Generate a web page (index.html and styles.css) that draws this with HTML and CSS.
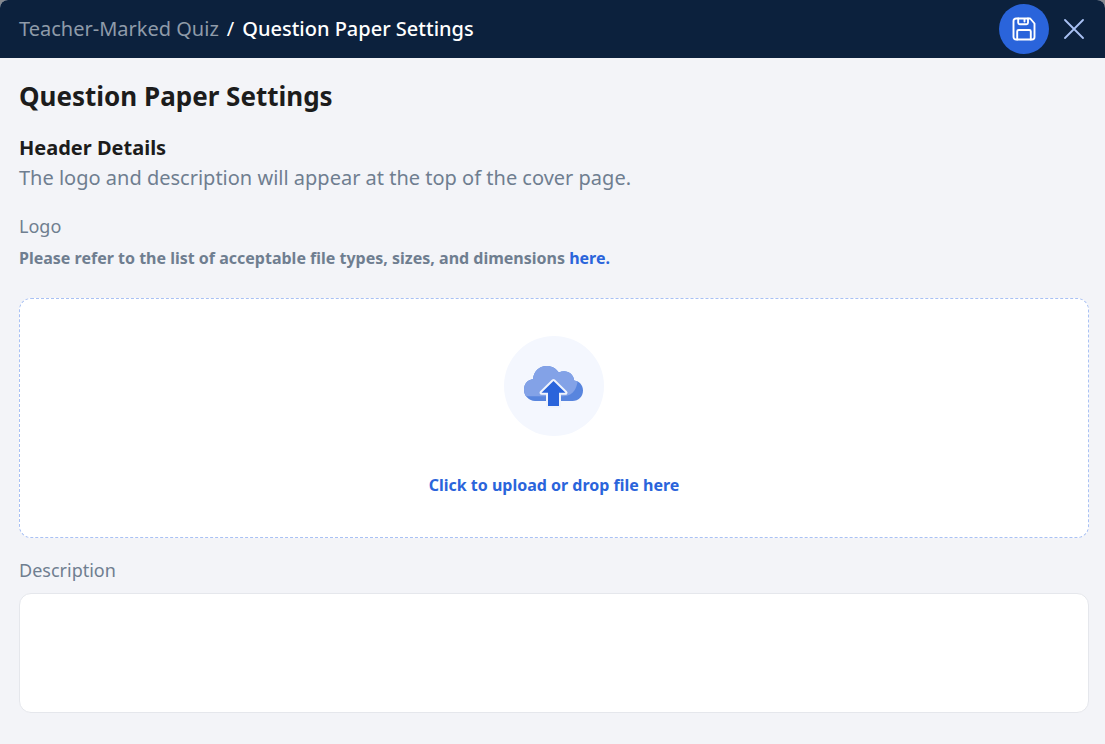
FILE: index.html
```html
<!DOCTYPE html>
<html lang="en">
<head>
<meta charset="utf-8">
<meta name="viewport" content="width=device-width, initial-scale=1">
<title>Question Paper Settings</title>
<link rel="stylesheet" href="styles.css">
</head>
<body>
<div class="dialog">
  <header class="topbar">
    <nav class="breadcrumb" aria-label="Breadcrumb">
      <a class="crumb" href="#">Teacher-Marked Quiz</a>
      <span class="separator">/</span>
      <span class="current">Question Paper Settings</span>
    </nav>
    <div class="actions">
      <button class="save" type="button" aria-label="Save">
        <svg width="24" height="24" viewBox="0 0 24 24" fill="none" stroke="currentColor" stroke-width="1.9" stroke-linejoin="round" stroke-linecap="round">
          <path d="M4 1.500h14.200l4.300 5V20a2.500 2.500 0 0 1-2.500 2.500H4A2.500 2.500 0 0 1 1.500 20V4A2.500 2.500 0 0 1 4 1.500Z"/>
          <path d="M6.200 1.500v4.300a1.500 1.500 0 0 0 1.500 1.500h6.800A1.500 1.500 0 0 0 16 5.800V1.500M12.500 2v2.500M5.200 22.500v-8A1.500 1.500 0 0 1 6.700 13h10.600a1.500 1.500 0 0 1 1.500 1.500v8"/>
        </svg>
      </button>
      <button class="close" type="button" aria-label="Close">
        <svg width="20" height="20" viewBox="0 0 20 20" fill="none" stroke="currentColor" stroke-width="1.8" stroke-linecap="round">
          <path d="M1 1l18 18M19 1L1 19"/>
        </svg>
      </button>
    </div>
  </header>
  <main class="content">
    <h1 class="title">Question Paper Settings</h1>
    <h2 class="subtitle">Header Details</h2>
    <p class="intro">The logo and description will appear at the top of the cover page.</p>
    <h3 class="label logo-label">Logo</h3>
    <p class="hint">Please refer to the list of acceptable file types, sizes, and dimensions <a class="link" href="#">here.</a></p>
    <button class="dropzone" type="button">
      <svg class="upload-icon" width="100" height="100" viewBox="0 0 100 100" aria-hidden="true">
        <circle cx="50" cy="50" r="50" fill="#f4f7fe"/>
        <clipPath id="cloud">
          <path d="M31 65A11.300 11.300 0 0 1 20 53.700C20 47.500 24 43.500 29 43.200C29.500 35.500 35 30 42.500 30C48 30 52.500 32.700 54.800 36.500C62 33 69.500 37 70.200 44.600C75.500 45.200 79 49.500 79 54.500C79 60.500 74.500 65 68.500 65Z"/>
        </clipPath>
        <g clip-path="url(#cloud)">
          <path fill="#5885de" d="M18 28h64v40H18z"/>
          <path fill="#83a2e7" d="M18 28h54.500C75.500 42 75 59.500 59 60.200H18z"/>
        </g>
        <path fill="#2a64db" stroke="#eff3fc" stroke-width="4" stroke-linejoin="round" paint-order="stroke" d="M49.500 45L61.500 56.800H55V70H44V56.800H37.500Z"/>
      </svg>
      <span>Click to upload or drop file here</span>
    </button>
    <label class="label" for="description">Description</label>
    <textarea class="description" id="description"></textarea>
  </main>
</div>
</body>
</html>
```
FILE: styles.css
```css
* {
  box-sizing: border-box;
}

body {
  margin: 0;
  background: #85898f;
  color: #1c1c1c;
  font-family: "Noto Sans", sans-serif;
}

.dialog {
  min-height: 100vh;
  background: #f3f4f8;
  border-radius: 8px 8px 0 0;
  overflow: hidden;
}

.topbar {
  display: flex;
  align-items: center;
  justify-content: space-between;
  height: 58px;
  padding: 0 21px 0 19px;
  background: #0c213d;
}

.breadcrumb {
  display: flex;
  gap: 8px;
  color: #fff;
  font-size: 20px;
  line-height: 28px;
}

.crumb {
  color: #8f9ba9;
  text-decoration: none;
}

.current {
  font-weight: 500;
}

.actions {
  display: flex;
  align-items: center;
  gap: 15px;
}

.save,
.close {
  display: flex;
  align-items: center;
  justify-content: center;
  padding: 0;
  border: 0;
  cursor: pointer;
}

.save {
  width: 50px;
  height: 50px;
  border-radius: 50%;
  background: #2a64db;
  color: #fff;
}

.close {
  background: none;
  color: #a9c1f4;
}

.content {
  display: flex;
  flex-direction: column;
  padding: 20px 16px 30px 19px;
}

.title,
.subtitle,
.intro,
.label,
.hint {
  margin: 0;
}

.title {
  margin-bottom: 19px;
  font-size: 26px;
  font-weight: 700;
  line-height: 36px;
}

.subtitle {
  font-size: 20px;
  font-weight: 700;
  line-height: 30px;
}

.intro {
  color: #6f7e90;
  font-size: 20px;
  line-height: 30px;
}

.label {
  color: #6f7e90;
  font-size: 18px;
  font-weight: 400;
  line-height: 28px;
}

.logo-label {
  margin-top: 19px;
}

.hint {
  margin: 6px 0 28px;
  color: #6f7e90;
  font-size: 16px;
  font-weight: 700;
  line-height: 24px;
}

.link {
  color: #2a64db;
  text-decoration: none;
}

.dropzone {
  display: flex;
  flex-direction: column;
  align-items: center;
  gap: 37px;
  margin-bottom: 18px;
  padding: 37px 20px 40px;
  border: 1px dashed #a9c1f4;
  border-radius: 12px;
  background: #fff;
  color: #2a64db;
  font: 700 16px/24px "Noto Sans", sans-serif;
  cursor: pointer;
}

.description {
  width: 100%;
  height: 120px;
  margin-top: 9px;
  padding: 12px;
  border: 1px solid #e5e7ec;
  border-radius: 12px;
  background: #fff;
  font: 400 16px/24px "Noto Sans", sans-serif;
  resize: none;
}
```
